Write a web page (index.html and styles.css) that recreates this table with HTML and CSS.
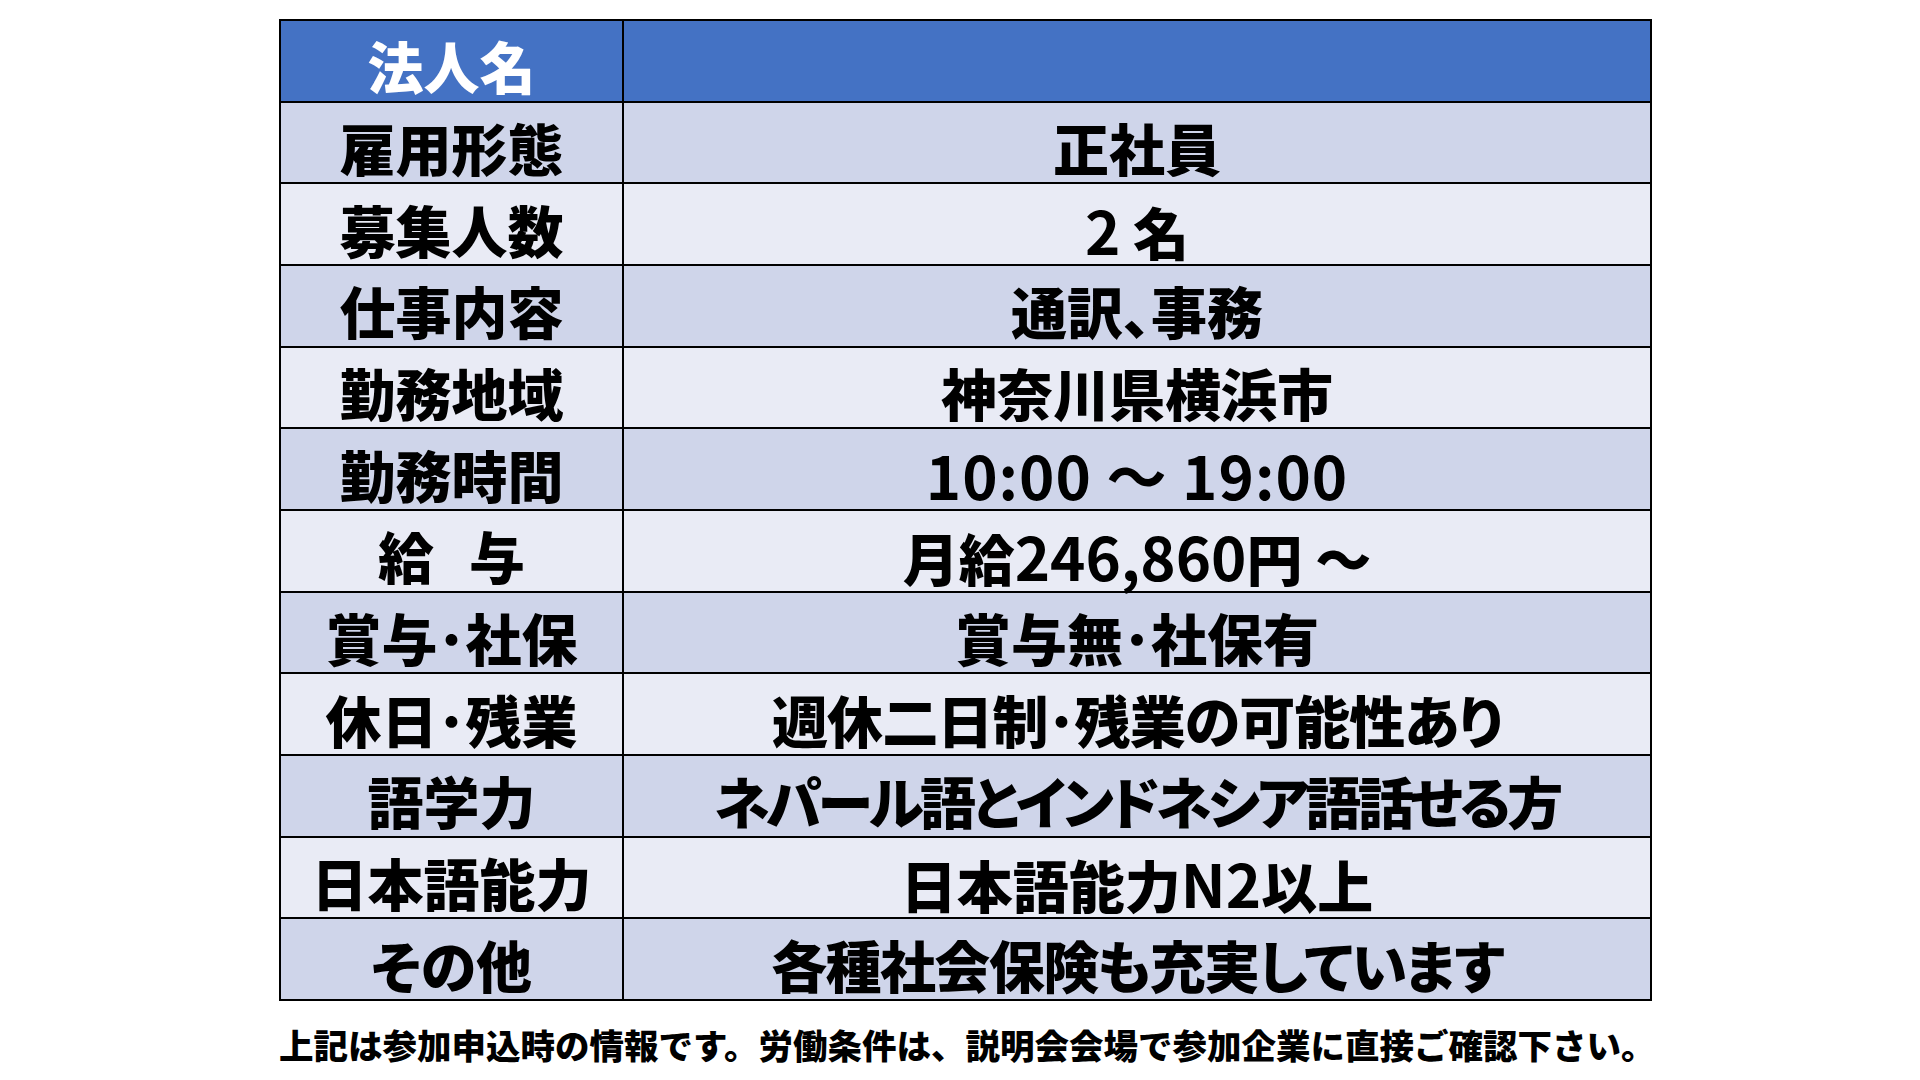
FILE: index.html
```html
<!DOCTYPE html>
<html lang="ja">
<head>
<meta charset="utf-8">
<title>求人情報</title>
<link rel="stylesheet" href="styles.css">
</head>
<body>
<main class="page">
  <table class="info">
    <colgroup>
      <col class="col-label">
      <col class="col-value">
    </colgroup>
    <tbody>
      <tr class="head"><th>法人名</th><td></td></tr>
      <tr class="dark"><th>雇用形態</th><td>正社員</td></tr>
      <tr class="light"><th>募集人数</th><td><span class="num">2</span> 名</td></tr>
      <tr class="dark"><th>仕事内容</th><td>通訳、事務</td></tr>
      <tr class="light"><th>勤務地域</th><td>神奈川県横浜市</td></tr>
      <tr class="dark"><th>勤務時間</th><td><span class="num time">10:00 ～ 19:00</span></td></tr>
      <tr class="light"><th class="spaced">給 与</th><td>月給<span class="num">246,860</span>円 ～</td></tr>
      <tr class="dark"><th>賞与･社保</th><td>賞与無･社保有</td></tr>
      <tr class="light"><th>休日･残業</th><td class="tight-s">週休二日制･残業の可能性あり</td></tr>
      <tr class="dark"><th>語学力</th><td class="tight-l">ネパール語とインドネシア語話せる方</td></tr>
      <tr class="light"><th>日本語能力</th><td>日本語能力<span class="num">N2</span>以上</td></tr>
      <tr class="dark"><th>その他</th><td class="tight-m">各種社会保険も充実しています</td></tr>
    </tbody>
  </table>
  <p class="note">上記は参加申込時の情報です。労働条件は、説明会会場で参加企業に直接ご確認下さい。</p>
</main>
</body>
</html>
```

FILE: styles.css
```css
html, body {
  margin: 0;
  padding: 0;
  background: #ffffff;
}

body {
  font-family: "Noto Sans CJK JP", "Noto Sans", sans-serif;
  color: #000000;
}

.page {
  width: 1920px;
  height: 1080px;
  padding: 19px 0 0 279px;
  box-sizing: border-box;
  overflow: hidden;
}

.info {
  width: 1373px;
  border-collapse: collapse;
  border: 2px solid #1a1a1a;
  table-layout: fixed;
}

.col-label {
  width: 343px;
}

.info th,
.info td {
  height: 81.67px;
  box-sizing: border-box;
  padding: 9px 0 0 0;
  border: 2px solid #000000;
  text-align: center;
  vertical-align: middle;
  font-size: 56px;
  font-weight: 900;
  line-height: 1;
  white-space: nowrap;
  font-feature-settings: "palt";
}

.info th.spaced {
  word-spacing: 22px;
}

.head th,
.head td {
  background: #4472c4;
  color: #ffffff;
}

.dark th,
.dark td {
  background: #cfd5ea;
}

.light th,
.light td {
  background: #e9ebf5;
}

.num {
  font-size: 60px;
  font-weight: 700;
}

.time {
  letter-spacing: 1px;
}

.info td.tight-s {
  letter-spacing: -0.9px;
}

.info td.tight-m {
  letter-spacing: -1.6px;
}

.info td.tight-l {
  letter-spacing: -3.5px;
}

.note {
  margin: 26px 0 0 0;
  font-size: 34.5px;
  font-weight: 900;
  line-height: 1;
  white-space: nowrap;
}
```
